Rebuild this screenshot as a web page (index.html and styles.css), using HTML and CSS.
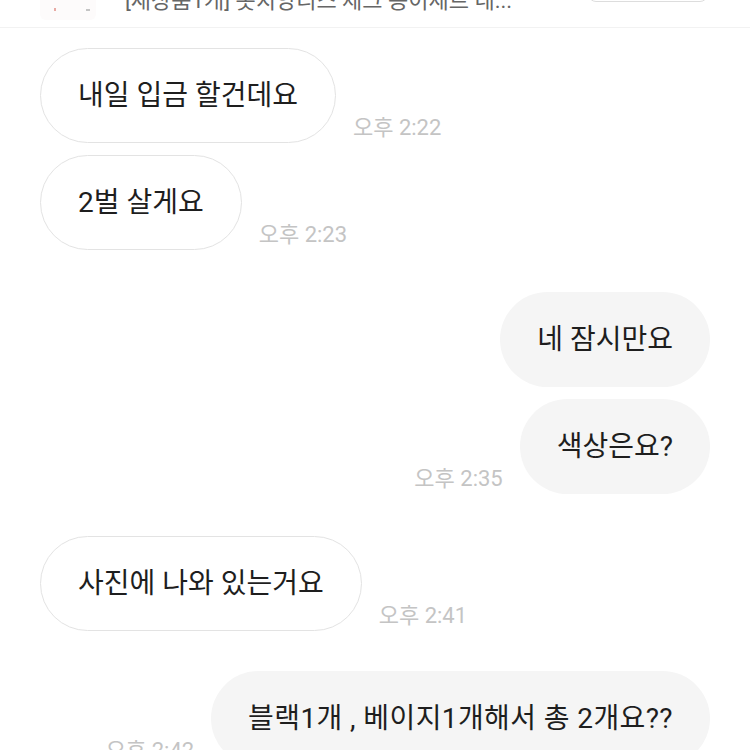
FILE: index.html
```html
<!DOCTYPE html>
<html lang="ko">
<head>
    <meta charset="UTF-8">
    <meta name="viewport" content="width=device-width, initial-scale=1.0">
    <title>채팅</title>
    <link rel="stylesheet" href="styles.css">
</head>
<body>
    <div class="product-bar">
        <div class="product-row">
            <div class="thumb">
                <span class="thumb-mark red"></span>
                <span class="thumb-mark gray"></span>
            </div>
            <div class="product-title">[새상품1개] 봇치앙리스 체크 봉이세트 네...</div>
            <div class="product-btn"></div>
        </div>
    </div>

    <div class="chat">
        <div class="msg msg-in">
            <div class="bubble">내일 입금 할건데요</div>
            <div class="time">오후 2:22</div>
        </div>
        <div class="msg msg-in">
            <div class="bubble">2벌 살게요</div>
            <div class="time">오후 2:23</div>
        </div>

        <div class="msg msg-out group-start">
            <div class="bubble">네 잠시만요</div>
        </div>
        <div class="msg msg-out">
            <div class="time">오후 2:35</div>
            <div class="bubble">색상은요?</div>
        </div>

        <div class="msg msg-in group-start">
            <div class="bubble">사진에 나와 있는거요</div>
            <div class="time">오후 2:41</div>
        </div>

        <div class="msg msg-out group-start last">
            <div class="time">오후 2:42</div>
            <div class="bubble wide">블랙1개 , 베이지1개해서 총 2개요??</div>
        </div>
    </div>
</body>
</html>
```

FILE: styles.css
```css
* {
    margin: 0;
    padding: 0;
    box-sizing: border-box;
}

body {
    font-family: Roboto, "Noto Sans CJK KR", sans-serif;
    background: #fff;
    color: #1e1e1e;
    overflow: hidden;
    height: 750px;
}

.product-bar {
    height: 28px;
    overflow: hidden;
    border-bottom: 1px solid #f2f2f2;
}

.product-row {
    display: flex;
    align-items: flex-end;
    height: 60px;
    margin-top: -44px;
    padding: 0 42px 0 40px;
}

.thumb {
    width: 56px;
    height: 56px;
    margin-bottom: -4px;
    border-radius: 6px;
    background: #fdfbfb;
    position: relative;
}

.thumb-mark {
    position: absolute;
    top: 44px;
    width: 2px;
    height: 3px;
}

.thumb-mark.red {
    left: 14px;
    background: #e8aaa4;
}

.thumb-mark.gray {
    left: 46px;
    width: 4px;
    height: 2px;
    top: 45px;
    background: #c4c4c4;
}

.product-title {
    margin-left: 29px;
    font-size: 22px;
    line-height: 30px;
    color: #666;
    white-space: nowrap;
    flex: 1;
}

.product-btn {
    width: 120px;
    height: 40px;
    margin-bottom: 14px;
    border: 1px solid #ddd;
    border-radius: 8px;
}

.chat {
    display: flex;
    flex-direction: column;
    gap: 12px;
    padding: 20px 40px 0;
}

.msg {
    display: flex;
    align-items: flex-end;
    gap: 17px;
}

.msg.group-start {
    margin-top: 30px;
}

.msg.group-start.last {
    margin-top: 28px;
}

.msg-out {
    justify-content: flex-end;
}

.bubble {
    font-size: 28px;
    line-height: 37px;
    padding: 29px 37px;
    border-radius: 48px;
    white-space: nowrap;
}

.bubble.wide {
    letter-spacing: 0.4px;
}

.msg-in .bubble {
    background: #fff;
    border: 1px solid #e3e3e3;
    padding: 28px 37px;
}

.msg-out .bubble {
    background: #f5f5f5;
}

.time {
    font-size: 22px;
    line-height: 26px;
    color: #c4c4c4;
    margin-bottom: 2px;
    white-space: nowrap;
}
```
